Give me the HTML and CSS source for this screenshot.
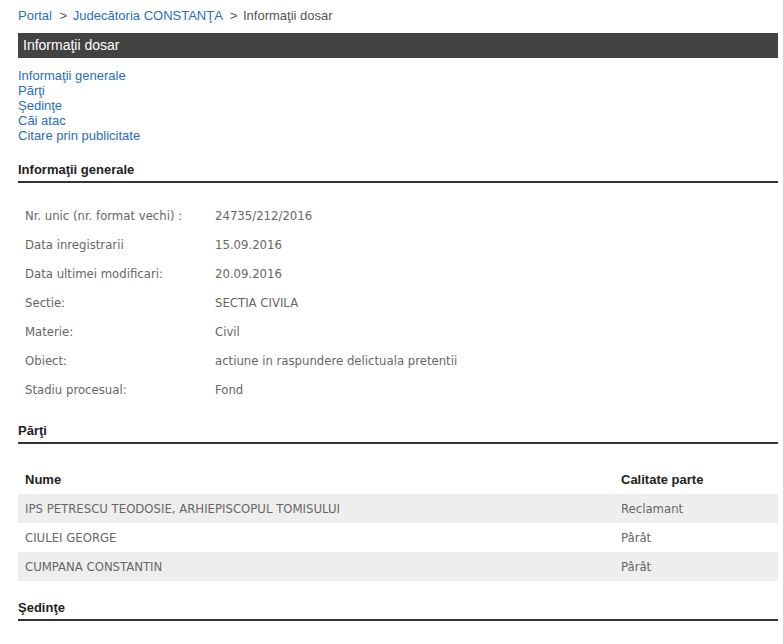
FILE: index.html
```html
<!DOCTYPE html>
<html lang="ro">
<head>
    <meta charset="UTF-8">
    <title>Informaţii dosar</title>
    <link rel="stylesheet" href="styles.css">
</head>
<body>
    <div class="page">
        <div class="breadcrumb">
            <a href="#">Portal</a>
            <span class="sep">&gt;</span>
            <a href="#">Judecătoria CONSTANŢA</a>
            <span class="sep">&gt;</span>
            <span class="current">Informaţii dosar</span>
        </div>

        <div class="title-bar">Informaţii dosar</div>

        <ul class="nav">
            <li><a href="#generale">Informaţii generale</a></li>
            <li><a href="#parti">Părţi</a></li>
            <li><a href="#sedinte">Şedinţe</a></li>
            <li><a href="#cai">Căi atac</a></li>
            <li><a href="#citare">Citare prin publicitate</a></li>
        </ul>

        <h3 id="generale" class="section">Informaţii generale</h3>
        <table class="info">
            <tr><td class="label">Nr. unic (nr. format vechi) :</td><td>24735/212/2016</td></tr>
            <tr><td class="label">Data inregistrarii</td><td>15.09.2016</td></tr>
            <tr><td class="label">Data ultimei modificari:</td><td>20.09.2016</td></tr>
            <tr><td class="label">Sectie:</td><td>SECTIA CIVILA</td></tr>
            <tr><td class="label">Materie:</td><td>Civil</td></tr>
            <tr><td class="label">Obiect:</td><td>actiune in raspundere delictuala pretentii</td></tr>
            <tr><td class="label">Stadiu procesual:</td><td>Fond</td></tr>
        </table>

        <h3 id="parti" class="section">Părţi</h3>
        <table class="parti">
            <thead>
                <tr><th>Nume</th><th class="calitate">Calitate parte</th></tr>
            </thead>
            <tbody>
                <tr class="odd"><td>IPS PETRESCU TEODOSIE, ARHIEPISCOPUL TOMISULUI</td><td>Reclamant</td></tr>
                <tr><td>CIULEI GEORGE</td><td>Pârât</td></tr>
                <tr class="odd"><td>CUMPANA CONSTANTIN</td><td>Pârât</td></tr>
            </tbody>
        </table>

        <h3 id="sedinte" class="section">Şedinţe</h3>
    </div>
</body>
</html>
```

FILE: styles.css
```css
body {
    margin: 0;
    padding: 0;
    background-color: #fff;
    font-family: "Liberation Sans", Arial, sans-serif;
    font-size: 13px;
}

a {
    color: #2a6ebb;
    text-decoration: none;
}

.page {
    width: 760px;
    margin-left: 18px;
}

.breadcrumb {
    padding-top: 8px;
    line-height: 15px;
    color: #555;
}

.breadcrumb .sep {
    margin: 0 2px 0 4px;
}

.title-bar {
    margin-top: 10px;
    height: 25px;
    line-height: 25px;
    padding-left: 5px;
    background-color: #434343;
    color: #fff;
    font-size: 14px;
}

.nav {
    list-style: none;
    margin: 10px 0 0 0;
    padding: 0;
    line-height: 15px;
}

.section {
    margin: 19px 0 0 0;
    padding-bottom: 4px;
    line-height: 15px;
    font-size: 13px;
    font-weight: bold;
    color: #222;
    border-bottom: 2px solid #333;
}

.info {
    margin-top: 18px;
    border-collapse: collapse;
    font-family: "DejaVu Sans", Tahoma, sans-serif;
    font-stretch: condensed;
    font-size: 13px;
    color: #666;
}

.info td {
    height: 29px;
    padding: 0 7px;
    vertical-align: middle;
}

.info td.label {
    width: 176px;
}

.parti {
    width: 100%;
    margin-top: 21px;
    border-collapse: collapse;
    font-family: "DejaVu Sans", Tahoma, sans-serif;
    font-stretch: condensed;
    font-size: 13px;
    color: #666;
}

.parti th {
    height: 29px;
    padding: 0 7px;
    text-align: left;
    font-family: "Liberation Sans", Arial, sans-serif;
    font-stretch: normal;
    font-size: 13px;
    color: #222;
}

.parti th.calitate {
    width: 150px;
}

.parti td {
    height: 29px;
    padding: 0 7px;
}

.parti tr.odd td {
    background-color: #eee;
}
```
